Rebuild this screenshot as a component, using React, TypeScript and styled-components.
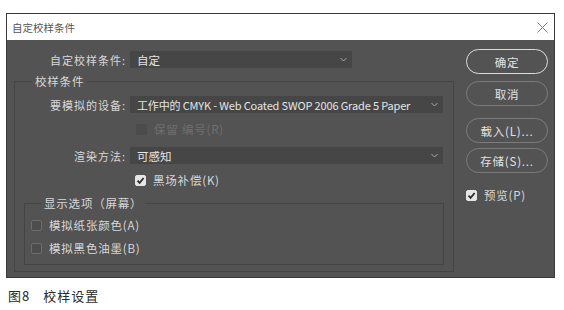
import React from "react";
import styled, { createGlobalStyle } from "styled-components";

const GlobalStyle = createGlobalStyle`
  body {
    margin: 0;
    background: #ffffff;
    font-family: "Noto Sans CJK SC", "Liberation Sans", sans-serif;
  }
`;

const Page = styled.div`
  padding: 13px 0 0 6px;
  width: 564px;
  height: 310px;
  box-sizing: border-box;
`;

const Dialog = styled.div`
  width: 549px;
  height: 265px;
  box-sizing: border-box;
  border: 1px solid #3a3a3a;
  background: #535353;
  display: flex;
  flex-direction: column;
`;

const TitleBar = styled.div`
  height: 26px;
  background: #ffffff;
  display: flex;
  align-items: center;
  justify-content: space-between;
  padding: 0 6px 0 5px;
  font-size: 10.5px;
  color: #555;
`;

const CloseIcon = styled.svg`
  width: 11px;
  height: 11px;
`;

const Body = styled.div`
  flex: 1;
  display: flex;
`;

const LeftColumn = styled.div`
  width: 447px;
  padding: 11px 0 0 7px;
  box-sizing: border-box;
  display: flex;
  flex-direction: column;
`;

const RightColumn = styled.div`
  padding: 9px 0 0 12px;
  display: flex;
  flex-direction: column;
`;

const FieldRow = styled.div<{ $labelWidth: number }>`
  display: grid;
  grid-template-columns: ${(p) => p.$labelWidth}px auto;
  column-gap: 4px;
  align-items: center;
`;

const Label = styled.span`
  text-align: right;
  font-size: 11px;
  color: #d8d8d8;
  letter-spacing: 1px;
  white-space: nowrap;
`;

const Select = styled.div<{ $width: number }>`
  width: ${(p) => p.$width}px;
  height: 17px;
  box-sizing: border-box;
  background: #464646;
  display: flex;
  align-items: center;
  justify-content: space-between;
  padding: 0 5px 0 7px;
  font-size: 11.5px;
  color: #e4e4e4;
  white-space: nowrap;
`;

const SelectValue = styled.span<{ $compact?: boolean }>`
  font-size: ${(p) => (p.$compact ? "11px" : "inherit")};
  letter-spacing: ${(p) => (p.$compact ? "-0.15px" : "0")};
`;

const Chevron = styled.svg`
  width: 7px;
  height: 5px;
  flex-shrink: 0;
  margin-left: 4px;
`;

const Group = styled.fieldset<{ $inset?: number }>`
  margin: 0 ${(p) => p.$inset ?? 0}px 0 ${(p) => p.$inset ?? 0}px;
  padding: 0;
  border: 1px solid #444444;
  min-width: 0;
  display: flex;
  flex-direction: column;
`;

const Legend = styled.legend<{ $offset: number }>`
  margin-left: ${(p) => p.$offset}px;
  padding: 0 3px;
  font-size: 11.5px;
  line-height: 16px;
  color: #d8d8d8;
  letter-spacing: 0.8px;
`;

const CheckRow = styled.label<{ $indent: number; $disabled?: boolean }>`
  display: flex;
  align-items: center;
  height: 16px;
  padding-left: ${(p) => p.$indent}px;
  font-size: 11.5px;
  letter-spacing: 0.8px;
  color: ${(p) => (p.$disabled ? "#6f6f6f" : "#d8d8d8")};
`;

const Box = styled.span<{ $checked?: boolean; $disabled?: boolean }>`
  width: 11px;
  height: 11px;
  box-sizing: border-box;
  border-radius: 2px;
  margin-right: 7px;
  display: flex;
  align-items: center;
  justify-content: center;
  background: ${(p) =>
    p.$checked ? "#e6e6e6" : p.$disabled ? "#4b4b4b" : "#4d4d4d"};
  border: 1px solid
    ${(p) => (p.$checked ? "#e6e6e6" : p.$disabled ? "#4b4b4b" : "#6c6c6c")};
`;

const PillButton = styled.button<{ $primary?: boolean }>`
  width: 82px;
  height: 25px;
  border-radius: 13px;
  background: transparent;
  border: 1px solid ${(p) => (p.$primary ? "#dcdcdc" : "#7c7c7c")};
  color: #e2e2e2;
  font-family: inherit;
  font-size: 11.5px;
  letter-spacing: 0.8px;
  padding: 0;
`;

const Caption = styled.div`
  margin-top: 8px;
  padding-left: 2px;
  font-size: 13px;
  color: #2a2a2a;
  display: flex;
  gap: 13px;
`;

const CaptionPart = styled.span`
  letter-spacing: 1px;
`;

const Spacer = styled.div<{ $h: number }>`
  height: ${(p) => p.$h}px;
  flex-shrink: 0;
`;

const ChevronDown = () => (
  <Chevron viewBox="0 0 7 5">
    <path d="M0.5 1 L3.5 4 L6.5 1" stroke="#a8a8a8" strokeWidth="1" fill="none" />
  </Chevron>
);

const Check = ({ checked, disabled }: { checked?: boolean; disabled?: boolean }) => (
  <Box $checked={checked} $disabled={disabled}>
    {checked && (
      <svg width="9" height="9" viewBox="0 0 9 9">
        <path d="M1.5 4.6 L3.6 6.8 L7.6 2" stroke="#2b2b2b" strokeWidth="1.8" fill="none" />
      </svg>
    )}
  </Box>
);

export default function App() {
  return (
    <>
      <GlobalStyle />
      <Page>
        <Dialog>
          <TitleBar>
            <span>自定校样条件</span>
            <CloseIcon viewBox="0 0 11 11">
              <path d="M0.5 0.5 L10.5 10.5 M10.5 0.5 L0.5 10.5" stroke="#7a7a7a" strokeWidth="1" />
            </CloseIcon>
          </TitleBar>
          <Body>
            <LeftColumn>
              <FieldRow $labelWidth={112}>
                <Label>自定校样条件:</Label>
                <Select $width={222}>
                  <SelectValue>自定</SelectValue>
                  <ChevronDown />
                </Select>
              </FieldRow>
              <Spacer $h={5} />
              <Group>
                <Legend $offset={17}>校样条件</Legend>
                <Spacer $h={7} />
                <FieldRow $labelWidth={111}>
                  <Label>要模拟的设备:</Label>
                  <Select $width={313}>
                    <SelectValue $compact>工作中的 CMYK - Web Coated SWOP 2006 Grade 5 Paper</SelectValue>
                    <ChevronDown />
                  </Select>
                </FieldRow>
                <Spacer $h={8} />
                <CheckRow $indent={121} $disabled>
                  <Check disabled />
                  保留 编号(R)
                </CheckRow>
                <Spacer $h={10} />
                <FieldRow $labelWidth={111}>
                  <Label>渲染方法:</Label>
                  <Select $width={313}>
                    <SelectValue>可感知</SelectValue>
                    <ChevronDown />
                  </Select>
                </FieldRow>
                <Spacer $h={8} />
                <CheckRow $indent={120}>
                  <Check checked />
                  黑场补偿(K)
                </CheckRow>
                <Spacer $h={7} />
                <Group $inset={9}>
                  <Legend $offset={16}>显示选项（屏幕）</Legend>
                  <Spacer $h={6} />
                  <CheckRow $indent={6}>
                    <Check />
                    模拟纸张颜色(A)
                  </CheckRow>
                  <Spacer $h={7} />
                  <CheckRow $indent={6}>
                    <Check />
                    模拟黑色油墨(B)
                  </CheckRow>
                  <Spacer $h={8} />
                </Group>
                <Spacer $h={6} />
              </Group>
            </LeftColumn>
            <RightColumn>
              <PillButton $primary>确定</PillButton>
              <Spacer $h={7} />
              <PillButton>取消</PillButton>
              <Spacer $h={12} />
              <PillButton>载入(L)...</PillButton>
              <Spacer $h={5} />
              <PillButton>存储(S)...</PillButton>
              <Spacer $h={14} />
              <CheckRow $indent={0}>
                <Check checked />
                预览(P)
              </CheckRow>
            </RightColumn>
          </Body>
        </Dialog>
        <Caption>
          <CaptionPart>图8</CaptionPart>
          <CaptionPart>校样设置</CaptionPart>
        </Caption>
      </Page>
    </>
  );
}
